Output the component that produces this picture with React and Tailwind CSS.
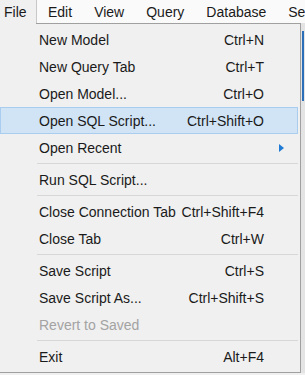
// App.jsx - Workbench "File" menu opened
const items = [
  { label: 'New Model', key: 'Ctrl+N' },
  { label: 'New Query Tab', key: 'Ctrl+T' },
  { label: 'Open Model...', key: 'Ctrl+O' },
  { label: 'Open SQL Script...', key: 'Ctrl+Shift+O', active: true },
  { label: 'Open Recent', sub: true },
  { sep: true },
  { label: 'Run SQL Script...' },
  { sep: true },
  { label: 'Close Connection Tab', key: 'Ctrl+Shift+F4' },
  { label: 'Close Tab', key: 'Ctrl+W' },
  { sep: true },
  { label: 'Save Script', key: 'Ctrl+S' },
  { label: 'Save Script As...', key: 'Ctrl+Shift+S' },
  { label: 'Revert to Saved', disabled: true },
  { sep: true },
  { label: 'Exit', key: 'Alt+F4' },
]

const topMenu = ['Edit', 'View', 'Query', 'Database', 'Server']

export default function App() {
  return (
    <div className="w-[305px] h-[375px] overflow-hidden bg-[#f0f0f0] text-[14px] text-[#1a1a1a] font-['Liberation_Sans',Arial,sans-serif] leading-none">
      {/* Menu bar */}
      <div className="flex h-[23px] bg-[#fafafa] whitespace-nowrap">
        <div className="w-[37px] shrink-0 bg-[#f0f0f0] border-r border-[#c8c8c8] pl-[4px] flex items-center">File</div>
        <div className="flex items-center gap-[22px] pl-[11px]">
          {topMenu.map((m) => (
            <span key={m}>{m}</span>
          ))}
        </div>
      </div>

      <div className="flex">
        {/* Dropdown */}
        <div className="w-[301px] shrink-0 border-r border-b border-[#a0a0a0] bg-[#f0f0f0]">
          <div className="ml-[36px] h-px bg-[#a0a0a0]" />
          <div className="pt-[2px] pb-[2px]">
            {items.map((it, i) =>
              it.sep ? (
                <div key={i} className="h-[5px] flex items-center">
                  <div className="ml-[37px] mr-[2px] flex-1 h-px bg-[#d7d7d7]" />
                </div>
              ) : (
                <div
                  key={i}
                  className={`h-[27px] mr-[2px] flex items-center pl-[38px] pr-[33px] border ${
                    it.active ? 'bg-[#d1e4f6] border-[#a8cdef]' : 'border-transparent'
                  } ${it.disabled ? 'text-[#a3a3a3]' : ''}`}
                >
                  <span className="flex-1">{it.label}</span>
                  {it.key && <span>{it.key}</span>}
                  {it.sub && (
                    <svg width="5" height="8" viewBox="0 0 5 8" className="mr-[-20px]">
                      <polygon points="0,0 5,4 0,8" fill="#1f7bd4" />
                    </svg>
                  )}
                </div>
              )
            )}
          </div>
        </div>

        {/* Window behind, peeking on the right */}
        <div className="flex-1 flex flex-col bg-[#e4e4e4]">
          <div className="h-[8px]" />
          <div className="h-[70px] ml-[1px] w-[2px] bg-[#2a6fb8]" />
        </div>
      </div>
    </div>
  )
}
